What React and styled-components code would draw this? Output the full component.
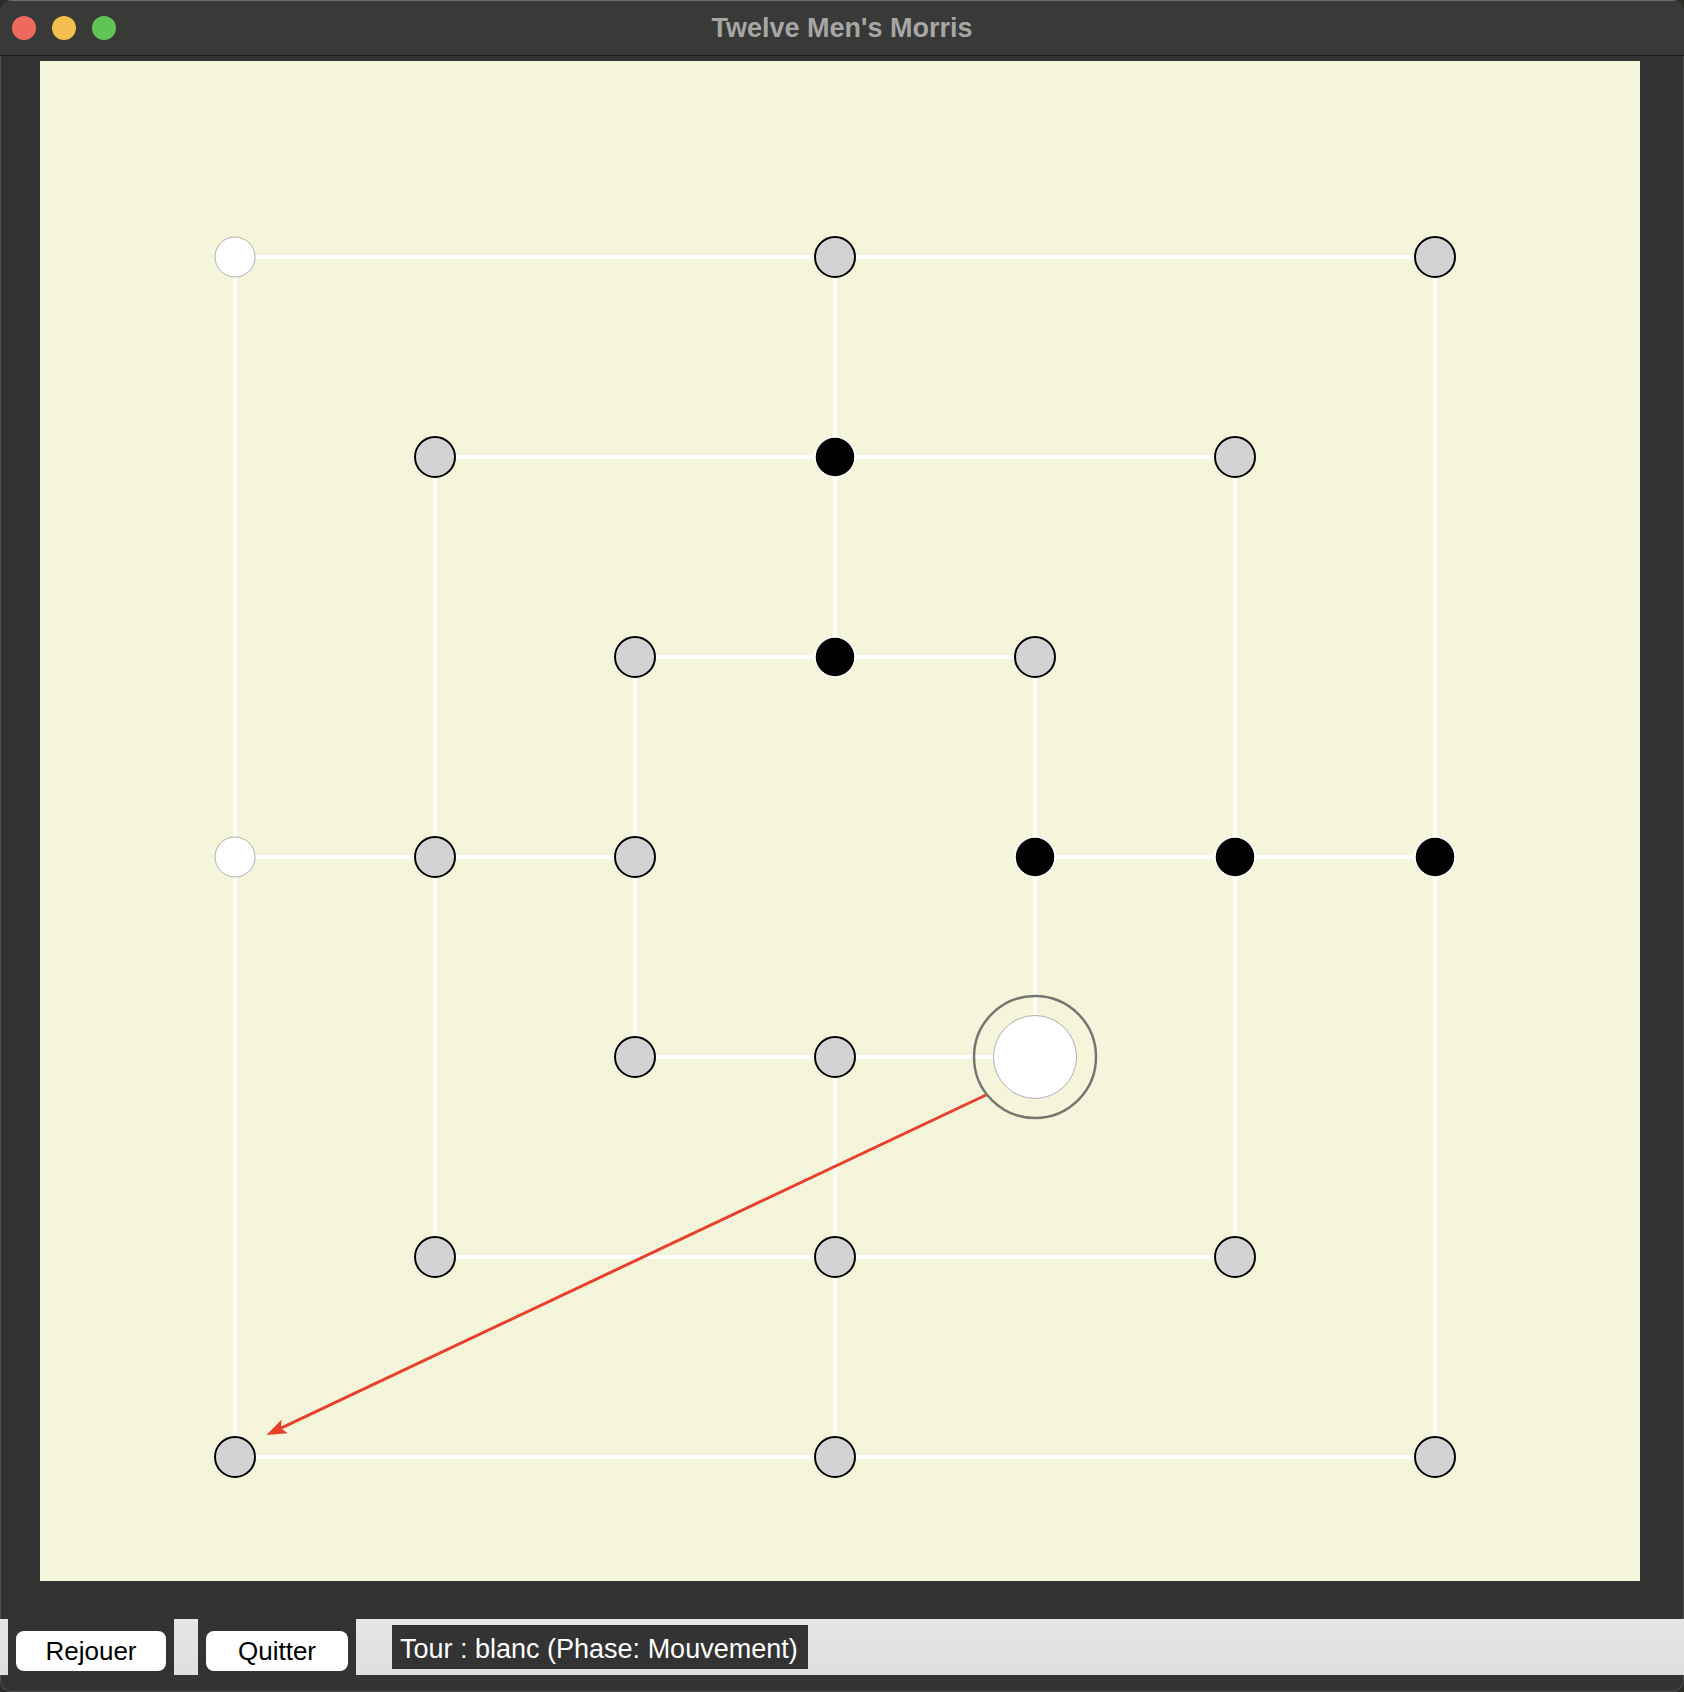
import React from 'react';
import styled, { createGlobalStyle } from 'styled-components';

const GlobalStyle = createGlobalStyle`
  html, body {
    margin: 0;
    padding: 0;
    background: #2a2d28;
  }
  * {
    box-sizing: border-box;
  }
`;

const WindowFrame = styled.div`
  width: 1684px;
  height: 1692px;
  background: #333333;
  border-radius: 12px;
  overflow: hidden;
  display: flex;
  flex-direction: column;
  box-shadow: inset 0 0 0 1px #4d4d4d;
  font-family: 'Liberation Sans', Arial, sans-serif;
`;

const TitleBar = styled.div`
  height: 56px;
  flex-shrink: 0;
  background: #393938;
  border-top: 1px solid #6b6b6b;
  border-bottom: 1px solid #1d1d1d;
  display: grid;
  grid-template-columns: 1fr auto 1fr;
  align-items: center;
  padding: 0 12px;
`;

const Lights = styled.div`
  display: flex;
  gap: 16px;
  align-items: center;
`;

const Light = styled.span`
  width: 24px;
  height: 24px;
  border-radius: 50%;
  background: ${(p) => p.color};
`;

const Title = styled.div`
  color: #a6a6a6;
  font-size: 27px;
  font-weight: bold;
`;

const Main = styled.div`
  display: flex;
  flex-direction: column;
  padding: 5px 44px 0 40px;
`;

const Board = styled.div`
  width: 1600px;
  height: 1520px;
  background: #f5f5dc;
  svg {
    display: block;
  }
`;

const Toolbar = styled.div`
  margin-top: 38px;
  height: 56px;
  flex-shrink: 0;
  background: linear-gradient(#e5e5e5, #dfdfdf);
  display: flex;
  align-items: stretch;
  padding-left: 8px;
  gap: 24px;
`;

const ButtonFrame = styled.div`
  background: #333333;
  padding: 12px 8px 4px;
  display: flex;
`;

const ToolButton = styled.button`
  width: ${(p) => p.w}px;
  height: 40px;
  border: none;
  border-radius: 8px;
  background: #ffffff;
  color: #000;
  font-family: 'Liberation Sans', Arial, sans-serif;
  font-size: 26px;
  padding: 0;
  cursor: pointer;
`;

const Status = styled.div`
  margin: 6px 0 6px 12px;
  height: 44px;
  background: #333333;
  color: #ffffff;
  font-size: 27px;
  display: flex;
  align-items: center;
  padding: 4px 10px 0 8px;
`;

const X0 = 195;
const Y0 = 196;
const STEP = 200;
const px = (i) => X0 + STEP * i;
const py = (j) => Y0 + STEP * j;

const LINES = [
  [0, 0, 6, 0], [0, 6, 6, 6], [0, 0, 0, 6], [6, 0, 6, 6],
  [1, 1, 5, 1], [1, 5, 5, 5], [1, 1, 1, 5], [5, 1, 5, 5],
  [2, 2, 4, 2], [2, 4, 4, 4], [2, 2, 2, 4], [4, 2, 4, 4],
  [3, 0, 3, 2], [3, 4, 3, 6], [0, 3, 2, 3], [4, 3, 6, 3],
];

// g = empty, w = white, b = black
const POINTS = [
  [0, 0, 'w'], [3, 0, 'g'], [6, 0, 'g'], [0, 3, 'w'], [6, 3, 'b'], [0, 6, 'g'], [3, 6, 'g'], [6, 6, 'g'],
  [1, 1, 'g'], [3, 1, 'b'], [5, 1, 'g'], [1, 3, 'g'], [5, 3, 'b'], [1, 5, 'g'], [3, 5, 'g'], [5, 5, 'g'],
  [2, 2, 'g'], [3, 2, 'b'], [4, 2, 'g'], [2, 3, 'g'], [4, 3, 'b'], [2, 4, 'g'], [3, 4, 'g'],
];

const SELECTED = [4, 4];

const pieceStyle = {
  g: { fill: '#d3d3d3', stroke: '#000', strokeWidth: 2 },
  w: { fill: '#fff', stroke: '#b0b0b0', strokeWidth: 1 },
  b: { fill: '#000', stroke: '#fff', strokeWidth: 1.5 },
};

function Arrow({ from, to }) {
  const dx = to[0] - from[0];
  const dy = to[1] - from[1];
  const len = Math.hypot(dx, dy);
  const ux = dx / len;
  const uy = dy / len;
  const nx = -uy;
  const ny = ux;
  const neck = [to[0] - ux * 16, to[1] - uy * 16];
  const back = [to[0] - ux * 20, to[1] - uy * 20];
  const w = 7.5;
  const pts = [
    to,
    [back[0] + nx * w, back[1] + ny * w],
    neck,
    [back[0] - nx * w, back[1] - ny * w],
  ]
    .map((p) => p.join(','))
    .join(' ');
  return (
    <g>
      <line x1={from[0]} y1={from[1]} x2={neck[0]} y2={neck[1]} stroke="#e8402a" strokeWidth="3" />
      <polygon points={pts} fill="#e8402a" />
    </g>
  );
}

function MorrisBoard() {
  return (
    <Board>
      <svg width="1600" height="1520" viewBox="0 0 1600 1520">
        {LINES.map(([a, b, c, d], k) => (
          <line key={k} x1={px(a)} y1={py(b)} x2={px(c)} y2={py(d)} stroke="#fff" strokeWidth="4" />
        ))}
        {POINTS.map(([i, j, t]) => (
          <circle key={`${i}-${j}`} cx={px(i)} cy={py(j)} r="20" {...pieceStyle[t]} />
        ))}
        <circle cx={px(SELECTED[0])} cy={py(SELECTED[1])} r="41.5" fill="#fff" stroke="#b0b0b0" strokeWidth="1" />
        <circle cx={px(SELECTED[0])} cy={py(SELECTED[1])} r="61" fill="none" stroke="#767671" strokeWidth="2.5" />
        <Arrow from={[946, 1034]} to={[226.5, 1374]} />
      </svg>
    </Board>
  );
}

export default function App() {
  return (
    <>
      <GlobalStyle />
      <WindowFrame>
        <TitleBar>
          <Lights>
            <Light color="#ee6a5e" />
            <Light color="#f5bf4f" />
            <Light color="#61c554" />
          </Lights>
          <Title>Twelve Men's Morris</Title>
          <div />
        </TitleBar>
        <Main>
          <MorrisBoard />
        </Main>
        <Toolbar>
          <ButtonFrame>
            <ToolButton w={150}>Rejouer</ToolButton>
          </ButtonFrame>
          <ButtonFrame>
            <ToolButton w={142}>Quitter</ToolButton>
          </ButtonFrame>
          <Status>Tour : blanc (Phase: Mouvement)</Status>
        </Toolbar>
      </WindowFrame>
    </>
  );
}
